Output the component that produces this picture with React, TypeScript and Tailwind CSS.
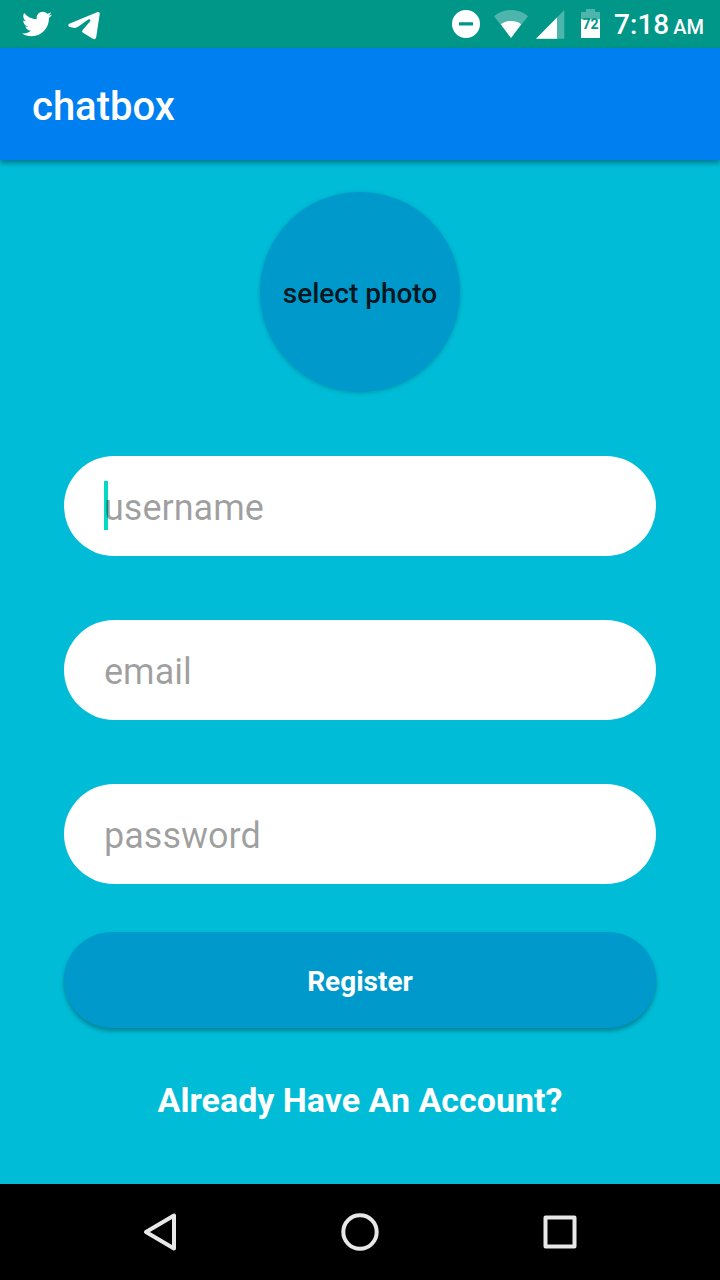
import React from "react";
import { FaTwitter } from "react-icons/fa";

function TelegramIcon() {
  return (
    <svg viewBox="0 0 32 28" className="h-7 w-8" fill="#fff" aria-hidden="true">
      <path d="M1.200 11.700 29.600.1Q31.900-.5 31.700 2L28.200 25.200Q27.600 28 24.800 26.800L15 20.800Q13.400 19.700 14.600 18L22 9.400Q22.800 8.200 22 7.500Q21.200 7 20.200 7.500L10.400 14.600Q8.500 16 6.600 15.900L1.600 14.900Q-.9 13.100 1.200 11.700z" />
    </svg>
  );
}

function StatusBar() {
  return (
    <div className="flex h-12 items-center justify-between bg-[#009688] pr-4 pl-[22px]">
      <div className="flex items-center gap-4">
        <FaTwitter className="h-[30px] w-[30px] text-white" aria-hidden="true" />
        <div className="pt-1">
          <TelegramIcon />
        </div>
      </div>
      <div className="flex items-center text-white">
        <svg viewBox="0 0 152 48" className="h-12 w-[152px]" aria-hidden="true">
          <path
            fillRule="evenodd"
            fill="#fff"
            d="M16 10a14 14 0 1 0 0 28a14 14 0 1 0 0-28zM9 22.300h14v3.200H9z"
          />
          <path fill="#fff" fillOpacity=".3" d="M61 38 44 16.200C48.500 12.200 54.500 10 61 10s12.500 2.200 17 6.200z" />
          <path fill="#fff" d="M61 38 50.800 24.200C53.500 22.100 57 21 61 21s7.500 1.100 10.200 3.200z" />
          <path fill="#fff" fillOpacity=".3" d="M86 38.700 114.300 10v28.700z" />
          <path fill="#fff" d="M86 38.700 107 17.400v21.300z" />
          <path fill="#fff" fillOpacity=".3" d="M136 9h9v3h5v7.200h-19V12h5z" />
          <path fill="#fff" d="M131 19.200h19V38h-19z" />
          <text
            x="140.500"
            y="29"
            textAnchor="middle"
            fill="#009688"
            className="font-['Roboto'] text-[14px] font-bold"
          >
            72
          </text>
        </svg>
        <div className="flex items-baseline gap-1 pt-1 pl-3">
          <span className="text-[28px] leading-8 font-medium">7:18</span>
          <span className="text-[20px] leading-8 font-medium">AM</span>
        </div>
      </div>
    </div>
  );
}

type FieldProps = { id: string; label: string; type: string; caret?: boolean };

function Field({ id, label, type, caret }: FieldProps) {
  return (
    <div className="relative h-[100px] rounded-full bg-white">
      {caret && <span className="absolute top-[25px] left-10 h-[49px] w-1 bg-[#03dac5]" />}
      <input
        id={id}
        name={id}
        type={type}
        aria-label={label}
        placeholder={label}
        className="relative h-full w-full rounded-full bg-transparent px-10 pt-1 text-[36px] text-black/85 outline-none placeholder:text-black/38"
      />
    </div>
  );
}

function NavBar() {
  return (
    <nav className="flex h-24 items-center justify-center gap-[152px] bg-black">
      <button type="button" aria-label="Back" className="h-12 w-12">
        <svg viewBox="0 0 48 48" fill="none" stroke="#e8e8e8" strokeWidth="4" strokeLinejoin="round">
          <path d="M38 7.500v33L10 24z" />
        </svg>
      </button>
      <button type="button" aria-label="Home" className="h-12 w-12">
        <svg viewBox="0 0 48 48" fill="none" stroke="#e8e8e8" strokeWidth="4">
          <circle cx="24" cy="24" r="16.700" />
        </svg>
      </button>
      <button type="button" aria-label="Recent apps" className="h-12 w-12">
        <svg viewBox="0 0 48 48" fill="none" stroke="#e8e8e8" strokeWidth="4" strokeLinejoin="round">
          <path d="M9.500 9.500h29v29h-29z" />
        </svg>
      </button>
    </nav>
  );
}

export default function App() {
  return (
    <div className="flex min-h-screen flex-col bg-[#00bcd7] font-['Roboto',sans-serif]">
      <StatusBar />
      <header className="flex h-28 items-center bg-[#0080f0] px-8 pt-[6px] shadow-[0_3px_5px_rgba(0,0,0,0.35)]">
        <h1 className="text-[40px] leading-12 font-medium text-white">chatbox</h1>
      </header>
      <main className="flex flex-1 flex-col px-16 pt-8">
        <button
          type="button"
          className="h-[200px] w-[200px] self-center rounded-full bg-[#0099cc] pt-1 text-[28px] font-medium text-black/87 shadow-[0_1px_4px_rgba(0,0,0,0.2)]"
        >
          select photo
        </button>
        <form className="flex flex-col pt-16" onSubmit={(e) => e.preventDefault()}>
          <div className="flex flex-col gap-16">
            <Field id="username" label="username" type="text" caret />
            <Field id="email" label="email" type="email" />
            <Field id="password" label="password" type="password" />
          </div>
          <button
            type="submit"
            className="mt-12 h-24 rounded-full bg-[#0099cc] pt-1 text-[28px] font-bold text-white shadow-[0_3px_4px_rgba(0,0,0,0.3)]"
          >
            Register
          </button>
        </form>
        <a href="#login" className="mt-12 self-center text-[34px] leading-12 font-bold text-white">
          Already Have An Account?
        </a>
      </main>
      <NavBar />
    </div>
  );
}
